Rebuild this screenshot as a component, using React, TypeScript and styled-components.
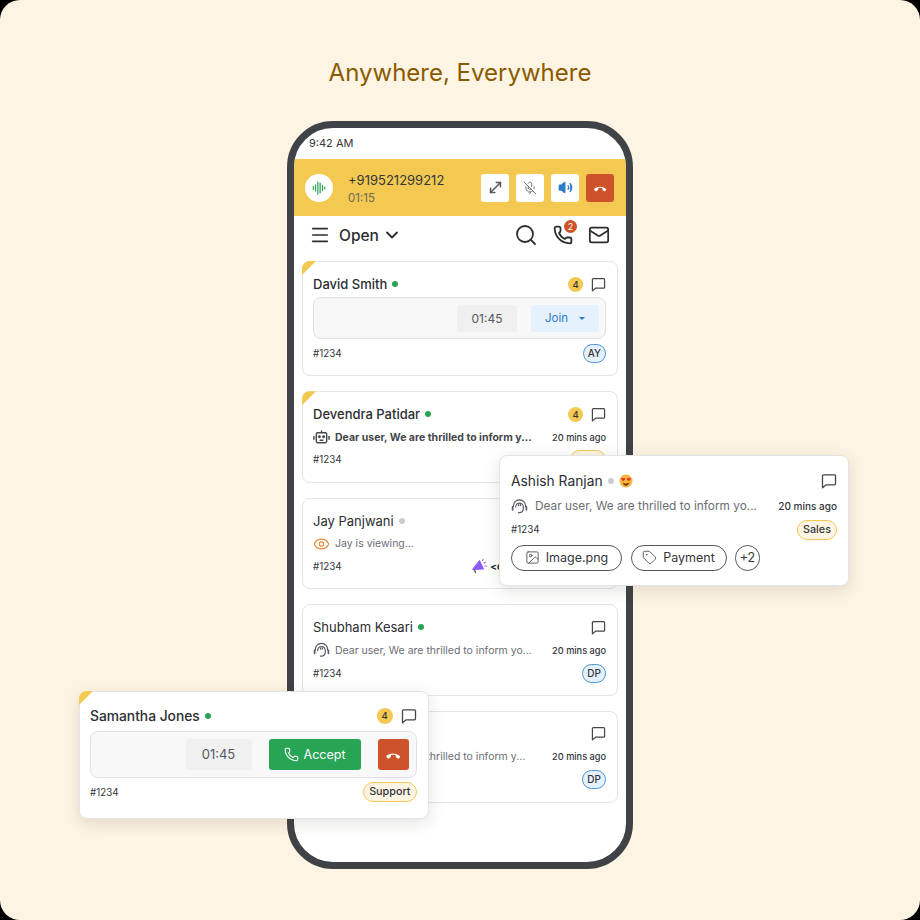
import React from 'react';
import styled, { createGlobalStyle } from 'styled-components';
import {
  ChevronDown,
  Eye,
  Image,
  Mail,
  Menu,
  MicOff,
  MoveDiagonal,
  Phone,
  Search,
  Tag,
  Volume2,
} from 'lucide-react';

const GlobalStyle = createGlobalStyle`
  html, body {
    margin: 0;
    padding: 0;
    background: #000;
  }
  body {
    font-family: Inter, "Liberation Sans", sans-serif;
    color: #2b2e31;
  }
  * {
    box-sizing: border-box;
  }
`;

const Panel = styled.div`
  position: relative;
  display: flex;
  flex-direction: column;
  align-items: center;
  width: 920px;
  height: 920px;
  padding-top: 58px;
  background: #fef4e3;
  border-radius: 20px;
  overflow: hidden;
`;

const Title = styled.h1`
  margin: 0;
  font-size: 24px;
  line-height: 30px;
  font-weight: 400;
  color: #8a5a00;
`;

const PhoneFrame = styled.div`
  display: flex;
  flex-direction: column;
  width: 346px;
  height: 748px;
  margin-top: 33px;
  background: #fff;
  border: 7px solid #3f4347;
  border-radius: 46px;
  overflow: hidden;
`;

const StatusBar = styled.div`
  height: 31px;
  padding: 8px 15px 0;
  font-size: 11px;
  line-height: 14px;
  color: #33363a;
`;

const CallBar = styled.div`
  display: flex;
  align-items: center;
  height: 57px;
  padding: 0 12px 0 11px;
  background: #f3c952;
`;

const WaveCircle = styled.div`
  display: flex;
  align-items: center;
  justify-content: center;
  width: 28px;
  height: 28px;
  border-radius: 50%;
  background: #fff;
`;

const CallInfo = styled.div`
  flex: 1;
  margin-left: 15px;
`;

const CallNumber = styled.div`
  font-size: 13px;
  line-height: 18px;
  color: #33363a;
`;

const CallTime = styled.div`
  margin-top: 2px;
  font-size: 11.5px;
  line-height: 14px;
  color: #6f6a55;
`;

const CallActions = styled.div`
  display: flex;
  gap: 7px;
`;

const SquareButton = styled.div<{ $danger?: boolean }>`
  display: flex;
  align-items: center;
  justify-content: center;
  width: 28px;
  height: 28px;
  border-radius: 3px;
  background: ${(p) => (p.$danger ? '#cd5229' : '#fff')};
`;

const NavBar = styled.div`
  display: flex;
  align-items: center;
  height: 38px;
  padding: 0 16px 0 15px;
`;

const NavLabel = styled.span`
  margin: 0 3px 0 8px;
  font-size: 15.5px;
  font-weight: 500;
  color: #2b2e31;
`;

const NavIcons = styled.div`
  display: flex;
  align-items: center;
  gap: 15px;
  margin-left: auto;
`;

const CallIcon = styled.div`
  position: relative;
  display: flex;
`;

const NotifyBadge = styled.span`
  position: absolute;
  top: -5px;
  right: -4px;
  width: 13px;
  height: 13px;
  border-radius: 50%;
  background: #cd5229;
  color: #fff;
  font-size: 9px;
  line-height: 13px;
  text-align: center;
`;

const CardList = styled.div`
  display: flex;
  flex-direction: column;
  gap: 14.9px;
  padding: 7px 8px 0;
`;

const Card = styled.div`
  position: relative;
  display: flex;
  flex-direction: column;
  gap: 0.85px;
  padding: 11px 11px 11px 10px;
  background: #fff;
  border: 1px solid #e2e4e7;
  border-radius: 8px;
`;

const FloatCard = styled(Card)<{ $left: number; $top: number; $width: number; $height: number; $inset: number }>`
  position: absolute;
  left: ${(p) => p.$left}px;
  top: ${(p) => p.$top}px;
  width: ${(p) => p.$width}px;
  height: ${(p) => p.$height}px;
  padding-left: ${(p) => p.$inset}px;
  box-shadow: 0 4px 16px rgba(60, 50, 30, 0.14);
`;

const Corner = styled.span`
  position: absolute;
  top: -1px;
  left: -1px;
  width: 14px;
  height: 14px;
  background: #f3c952;
  clip-path: polygon(0 0, 100% 0, 0 100%);
  border-top-left-radius: 8px;
`;

const Row = styled.div<{ $height?: number }>`
  display: flex;
  align-items: center;
  height: ${(p) => p.$height ?? 22}px;
`;

const Name = styled.span<{ $big?: boolean; $read?: boolean }>`
  font-size: ${(p) => (p.$big ? 13.8 : 13)}px;
  font-weight: ${(p) => (p.$read ? 400 : 500)};
  color: #2b2e31;
`;

const Dot = styled.span<{ $online?: boolean }>`
  width: 6px;
  height: 6px;
  margin: 0 5px;
  border-radius: 50%;
  background: ${(p) => (p.$online ? '#27a555' : '#c9cdd2')};
`;

const RowEnd = styled.div`
  display: flex;
  align-items: center;
  gap: 8px;
  margin-left: auto;
`;

const CountBadge = styled.span<{ $big?: boolean }>`
  width: ${(p) => (p.$big ? 16 : 15)}px;
  height: ${(p) => (p.$big ? 16 : 15)}px;
  border-radius: 50%;
  background: #f3c952;
  font-size: 9.5px;
  font-weight: 500;
  line-height: ${(p) => (p.$big ? 16 : 15)}px;
  text-align: center;
  color: #33363a;
`;

const IconSlot = styled.span`
  display: flex;
  align-items: center;
  justify-content: center;
  flex: none;
  width: 17px;
`;

const Message = styled.span<{ $bold?: boolean; $big?: boolean }>`
  margin-left: ${(p) => (p.$big ? 7 : 5)}px;
  font-size: ${(p) => (p.$big ? 11.85 : 10.5)}px;
  font-weight: ${(p) => (p.$bold ? 700 : 400)};
  color: ${(p) => (p.$bold ? '#44474b' : '#6b6e72')};
  white-space: nowrap;
`;

const TimeAgo = styled.span<{ $big?: boolean }>`
  margin-left: auto;
  font-size: ${(p) => (p.$big ? 10 : 9.2)}px;
  font-weight: 500;
  color: #33363a;
  white-space: nowrap;
`;

const TicketId = styled.span`
  font-size: 9.8px;
  color: #33363a;
`;

const Pill = styled.span<{ $tone: 'blue' | 'yellow'; $big?: boolean }>`
  margin-left: auto;
  padding: 0 ${(p) => (p.$big ? 5 : 4)}px;
  height: ${(p) => (p.$big ? 20 : 19)}px;
  border: 1px solid ${(p) => (p.$tone === 'blue' ? '#4d94d6' : '#f3c952')};
  border-radius: 10px;
  background: ${(p) => (p.$tone === 'blue' ? '#e5f1fd' : '#fef4e3')};
  font-size: ${(p) => (p.$big ? 10.8 : 10)}px;
  font-weight: 500;
  line-height: ${(p) => (p.$big ? 18 : 17)}px;
  color: #33363a;
`;

const Campaign = styled.div`
  display: flex;
  align-items: center;
  gap: 3px;
  margin-left: auto;
  font-size: 10px;
  font-weight: 700;
  white-space: nowrap;
  color: #2b2e31;
`;

const CallBox = styled.div<{ $height: number; $pad: number }>`
  display: flex;
  align-items: center;
  justify-content: flex-end;
  gap: 14px;
  height: ${(p) => p.$height}px;
  margin: 1.3px 0 2.3px;
  padding: 0 ${(p) => p.$pad}px;
  background: #f8f8f8;
  border: 1px solid #dfe1e4;
  border-radius: 8px;
`;

const TimerChip = styled.div<{ $width: number; $height: number; $size: number }>`
  width: ${(p) => p.$width}px;
  height: ${(p) => p.$height}px;
  border-radius: 3px;
  background: #f0f0f0;
  font-size: ${(p) => p.$size}px;
  line-height: ${(p) => p.$height}px;
  text-align: center;
  color: #55585c;
`;

const JoinButton = styled.div`
  display: flex;
  align-items: center;
  justify-content: center;
  gap: 11px;
  width: 68px;
  height: 27px;
  border-radius: 3px;
  background: #e5f1fd;
  color: #2a7bc8;
  font-size: 11.5px;
`;

const Caret = styled.span`
  width: 0;
  height: 0;
  border-left: 3.5px solid transparent;
  border-right: 3.5px solid transparent;
  border-top: 3.5px solid #2a7bc8;
`;

const AcceptButton = styled.div`
  display: flex;
  align-items: center;
  justify-content: center;
  gap: 5px;
  width: 92px;
  height: 31px;
  margin-left: 3px;
  border-radius: 3px;
  background: #27a555;
  color: #fff;
  font-size: 12.5px;
`;

const RejectButton = styled(SquareButton)`
  width: 31px;
  height: 31px;
  margin-left: 3px;
`;

const TagRow = styled.div`
  display: flex;
  align-items: center;
  gap: 8.5px;
  margin-top: 3px;
`;

const TagPill = styled.div<{ $width: number }>`
  display: flex;
  align-items: center;
  justify-content: center;
  gap: 6px;
  flex: none;
  width: ${(p) => p.$width}px;
  height: 26px;
  border: 1px solid #55585c;
  border-radius: 13px;
  font-size: 12.5px;
  color: #33363a;
`;

const HangUpIcon = ({ size = 14 }: { size?: number }) => (
  <svg width={size} height={size} viewBox="0 0 24 24" fill="#fff">
    <path d="M1.5 14c5.5-5.5 15.5-5.5 21 0 .4.4.4 1 0 1.4l-2 2c-.4.4-1 .4-1.4 0l-2.6-2.1c-.3-.2-.4-.6-.4-.9l-.1-2.1c-2.7-.8-4.3-.8-7 0l-.1 2.1c0 .3-.1.7-.4.9l-2.6 2.1c-.4.4-1 .4-1.4 0l-2-2c-.4-.4-.4-1 0-1.4z" />
  </svg>
);

const WaveIcon = () => (
  <svg width="14" height="14" viewBox="0 0 16 16" stroke="#27a555" strokeWidth="1.4" strokeLinecap="round">
    <path d="M1.5 6.5v3M4 4.5v7M6.7 1v14M9.3 2.5v11M12 5v6M14.5 7v2" />
  </svg>
);

const BotIcon = () => (
  <svg width="18" height="18" viewBox="0 0 18 18" fill="none" stroke="#44474b" strokeWidth="1.5">
    <rect x="3.5" y="4.5" width="11" height="10.5" rx="1.5" />
    <path d="M9 4.5V2M1 8v4M17 8v4M7 12.5h4" />
    <circle cx="6.8" cy="8.8" r="0.8" fill="#44474b" />
    <circle cx="11.2" cy="8.8" r="0.8" fill="#44474b" />
  </svg>
);

const AgentIcon = ({ size = 18 }: { size?: number }) => (
  <svg width={size} height={size} viewBox="0 0 18 18" fill="none" stroke="#55585c" strokeWidth="1.3">
    <path d="M2.5 9.5V8.5a6.5 6.5 0 0 1 13 0v1" />
    <path d="M5 10V9.5a4 4 0 0 1 8 0v2a4 4 0 0 1-4 4H7.5" />
    <path d="M8 7v1M10 7v1" strokeLinecap="round" />
    <path d="M1.7 9.5v3M16.3 9.5v3" strokeLinecap="round" strokeWidth="1.8" />
  </svg>
);

const CampaignIcon = () => (
  <svg width="16" height="16" viewBox="0 0 16 16" fill="none">
    <path d="M1.5 11.5 8.5 2.5l4 8.5z" fill="#8b5cf6" stroke="#8b5cf6" strokeLinejoin="round" />
    <path d="M3.5 12l1 2.5" stroke="#55585c" strokeWidth="1.3" strokeLinecap="round" />
    <path d="M11.5 2.5l.7-1M13 5l1.6-.7M14 8h1.5" stroke="#8b5cf6" strokeWidth="1.1" strokeLinecap="round" />
  </svg>
);

const HeartEyes = () => (
  <svg width="14" height="14" viewBox="0 0 14 14">
    <circle cx="7" cy="7" r="6.5" fill="#f5b53f" />
    <path d="M4.2 7.2 2.4 5.4c-.7-1 .8-2 1.8-.9 1-1.1 2.5-.1 1.8.9zM9.8 7.2 8 5.4c-.7-1 .8-2 1.8-.9 1-1.1 2.5-.1 1.8.9z" fill="#e3342f" />
    <path d="M3.8 8.8c1.8 1 4.6 1 6.4 0-.4 2-1.8 3-3.2 3s-2.8-1-3.2-3z" fill="#7a3b12" />
  </svg>
);

const Comment = ({ size = 15 }: { size?: number }) => (
  <svg width={size} height={size} viewBox="0 0 16 16" fill="none" stroke="#44474b" strokeWidth="1.3" strokeLinejoin="round">
    <path d="M2.5 1.8h11a1 1 0 0 1 1 1v8a1 1 0 0 1-1 1H5.2L1.5 14.8v-12a1 1 0 0 1 1-1z" />
  </svg>
);

type TicketProps = {
  name: string;
  online?: boolean;
  flagged?: boolean;
  count?: boolean;
  read?: boolean;
  icon: React.ReactNode;
  message: string;
  bold?: boolean;
  right: React.ReactNode;
  time?: boolean;
};

const Ticket = ({ name, online, flagged, count, read, icon, message, bold, right, time = true }: TicketProps) => (
  <Card>
    {flagged && <Corner />}
    <Row>
      <Name $read={read}>{name}</Name>
      <Dot $online={online} />
      <RowEnd>
        {count && <CountBadge>4</CountBadge>}
        <Comment />
      </RowEnd>
    </Row>
    <Row>
      <IconSlot>{icon}</IconSlot>
      <Message $bold={bold}>{message}</Message>
      {time && <TimeAgo>20 mins ago</TimeAgo>}
    </Row>
    <Row>
      <TicketId>#1234</TicketId>
      {right}
    </Row>
  </Card>
);

const DEAR = 'Dear user, We are thrilled to inform yo...';

const App = () => {
  return (
    <Panel>
      <GlobalStyle />
      <Title>Anywhere, Everywhere</Title>
      <PhoneFrame>
        <StatusBar>9:42 AM</StatusBar>
        <CallBar>
          <WaveCircle>
            <WaveIcon />
          </WaveCircle>
          <CallInfo>
            <CallNumber>+919521299212</CallNumber>
            <CallTime>01:15</CallTime>
          </CallInfo>
          <CallActions>
            <SquareButton>
              <MoveDiagonal size={17} strokeWidth={2.2} color="#55585c" />
            </SquareButton>
            <SquareButton>
              <MicOff size={14} strokeWidth={1.6} color="#6b6e72" />
            </SquareButton>
            <SquareButton>
              <Volume2 size={15} strokeWidth={2} color="#2a7bc8" fill="#2a7bc8" />
            </SquareButton>
            <SquareButton $danger>
              <HangUpIcon />
            </SquareButton>
          </CallActions>
        </CallBar>
        <NavBar>
          <Menu size={22} strokeWidth={1.8} color="#2b2e31" />
          <NavLabel>Open</NavLabel>
          <ChevronDown size={20} strokeWidth={2.2} color="#2b2e31" />
          <NavIcons>
            <Search size={24} strokeWidth={1.8} color="#2b2e31" />
            <CallIcon>
              <Phone size={20} strokeWidth={2.2} color="#2b2e31" />
              <NotifyBadge>2</NotifyBadge>
            </CallIcon>
            <Mail size={22} strokeWidth={1.9} color="#2b2e31" />
          </NavIcons>
        </NavBar>
        <CardList>
          <Card>
            <Corner />
            <Row>
              <Name>David Smith</Name>
              <Dot $online />
              <RowEnd>
                <CountBadge>4</CountBadge>
                <Comment />
              </RowEnd>
            </Row>
            <CallBox $height={42} $pad={6}>
              <TimerChip $width={60} $height={27} $size={12}>
                01:45
              </TimerChip>
              <JoinButton>
                Join
                <Caret />
              </JoinButton>
            </CallBox>
            <Row>
              <TicketId>#1234</TicketId>
              <Pill $tone="blue">AY</Pill>
            </Row>
          </Card>
          <Ticket
            name="Devendra Patidar"
            online
            flagged
            count
            bold
            icon={<BotIcon />}
            message="Dear user, We are thrilled to inform y..."
            right={<Pill $tone="yellow">Sales</Pill>}
          />
          <Ticket
            name="Jay Panjwani"
            read
            icon={<Eye size={20} strokeWidth={1.7} color="#e58a3c" />}
            message="Jay is viewing..."
            time={false}
            right={
              <Campaign>
                <CampaignIcon />
                &lt;campaign name here&gt;
              </Campaign>
            }
          />
          <Ticket
            name="Shubham Kesari"
            online
            read
            icon={<AgentIcon />}
            message={DEAR}
            right={<Pill $tone="blue">DP</Pill>}
          />
          <Ticket
            name="Priya Sharma"
            online
            read
            icon={<AgentIcon />}
            message="Dear user, We are thrilled to inform y..."
            right={<Pill $tone="blue">DP</Pill>}
          />
        </CardList>
      </PhoneFrame>

      <FloatCard $left={499} $top={455} $width={350} $height={131} $inset={11}>
        <Row $height={27}>
          <Name $big $read>
            Ashish Ranjan
          </Name>
          <Dot />
          <HeartEyes />
          <RowEnd>
            <Comment size={16} />
          </RowEnd>
        </Row>
        <Row $height={23}>
          <IconSlot>
            <AgentIcon size={19} />
          </IconSlot>
          <Message $big>{DEAR}</Message>
          <TimeAgo $big>20 mins ago</TimeAgo>
        </Row>
        <Row>
          <TicketId>#1234</TicketId>
          <Pill $tone="yellow" $big>
            Sales
          </Pill>
        </Row>
        <TagRow>
          <TagPill $width={111}>
            <Image size={15} strokeWidth={1.5} color="#55585c" />
            Image.png
          </TagPill>
          <TagPill $width={96}>
            <Tag size={15} strokeWidth={1.5} color="#55585c" />
            Payment
          </TagPill>
          <TagPill $width={25}>+2</TagPill>
        </TagRow>
      </FloatCard>

      <FloatCard $left={79} $top={691} $width={349.5} $height={127.5} $inset={10}>
        <Corner />
        <Row $height={26}>
          <Name $big>Samantha Jones</Name>
          <Dot $online />
          <RowEnd>
            <CountBadge $big>4</CountBadge>
            <Comment size={16} />
          </RowEnd>
        </Row>
        <CallBox $height={47} $pad={7}>
          <TimerChip $width={66} $height={31} $size={13}>
            01:45
          </TimerChip>
          <AcceptButton>
            <Phone size={15} strokeWidth={1.8} color="#fff" />
            Accept
          </AcceptButton>
          <RejectButton $danger>
            <HangUpIcon size={16} />
          </RejectButton>
        </CallBox>
        <Row>
          <TicketId>#1234</TicketId>
          <Pill $tone="yellow" $big>
            Support
          </Pill>
        </Row>
      </FloatCard>
    </Panel>
  );
};

export default App;
